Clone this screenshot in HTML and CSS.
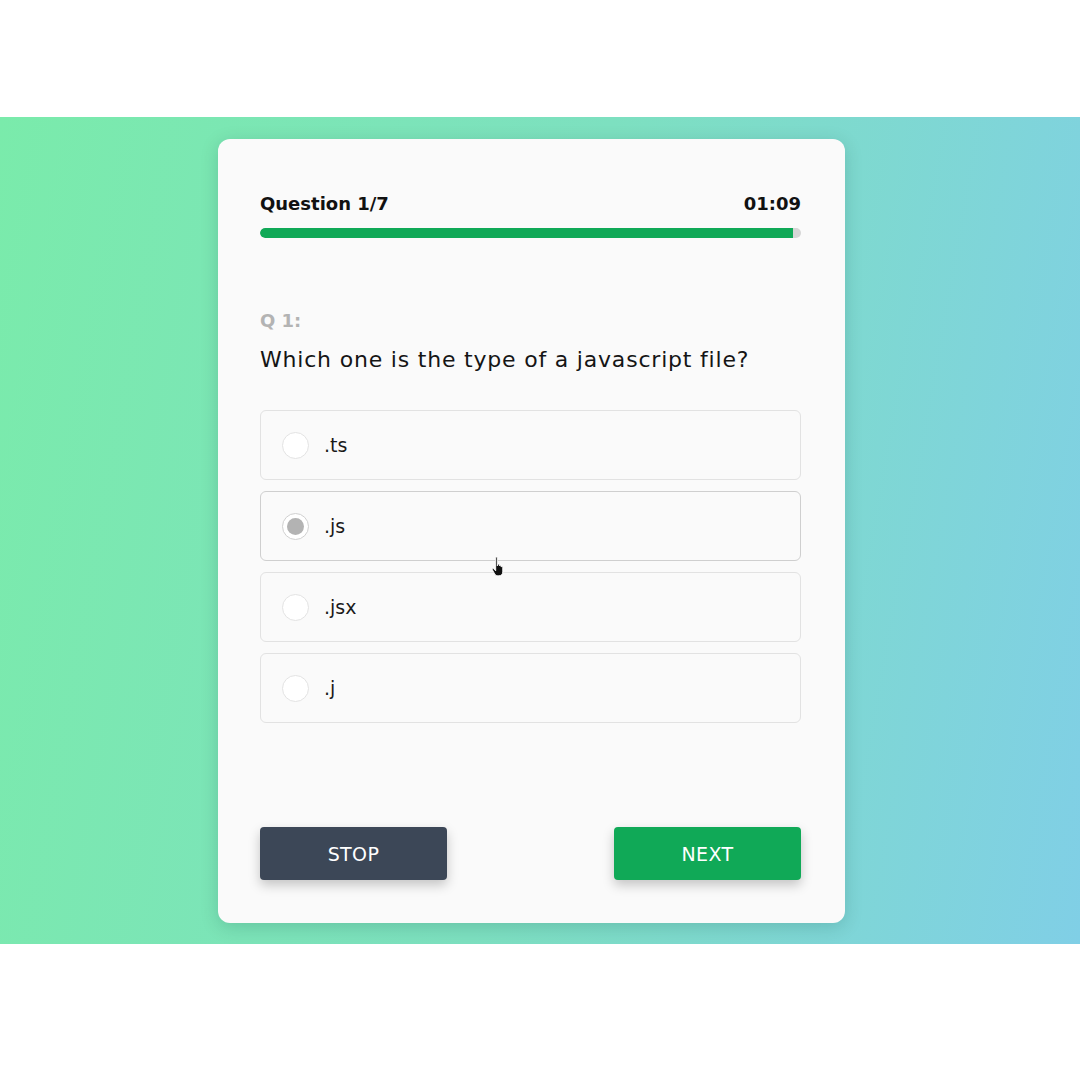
FILE: index.html
```html
<!DOCTYPE html>
<html>
<head>
<meta charset="utf-8">
<link rel="stylesheet" href="styles.css">
</head>
<body>
<div class="band">
  <div class="card">
    <div class="head">
      <span class="title">Question 1/7</span>
      <span class="timer">01:09</span>
    </div>
    <div class="bar"><div class="fill" style="width: 98.5%"></div></div>
    <div class="qnum">Q 1:</div>
    <div class="question">Which one is the type of a javascript file?</div>
    <div class="options">
      <div class="option"><span class="radio"></span><span class="label">.ts</span></div>
      <div class="option hover"><span class="radio checked"></span><span class="label">.js</span></div>
      <div class="option"><span class="radio"></span><span class="label">.jsx</span></div>
      <div class="option"><span class="radio"></span><span class="label">.j</span></div>
      <svg class="cursor" width="18" height="22" viewBox="0 0 16 20"><path d="M5 1.5c0-.8 1.5-.8 1.5 0V9l.3-1.2c.4-.8 1.6-.5 1.5.3l.1.9c.4-.8 1.5-.6 1.5.2v.8c.4-.7 1.5-.5 1.5.3v4.2c0 2-1.5 3.5-3.5 3.5H7c-1.3 0-2.2-.6-2.9-1.7L2 12.6c-.4-.8.5-1.6 1.2-1L5 13.5z" fill="#111" stroke="#fff" stroke-width="0.8"/></svg>
    </div>
    <div class="actions">
      <button class="btn stop">STOP</button>
      <button class="btn next">NEXT</button>
    </div>
  </div>
</div>
</body>
</html>
```
FILE: styles.css
```css
* { box-sizing: border-box; }
html, body { margin: 0; padding: 0; background: #ffffff; }
body {
  width: 1080px;
  height: 1080px;
  padding-top: 117px;
  font-family: "DejaVu Sans", "Open Sans", sans-serif;
  color: #1a1a1a;
}
.band {
  height: 827px;
  background: linear-gradient(100deg, #7aebab 0%, #7de0c0 50%, #80cfe6 100%);
  padding: 22px 0 0 218px;
  display: flex;
}
.card {
  width: 627px;
  height: 784px;
  background: #fafafa;
  border-radius: 12px;
  box-shadow: 0 4px 18px rgba(0, 60, 50, 0.18);
  padding: 53px 44px 0 42px;
  display: flex;
  flex-direction: column;
  position: relative;
}
.head {
  display: flex;
  justify-content: space-between;
  font-weight: bold;
  font-size: 18px;
  line-height: 24px;
  color: #111;
}
.bar {
  margin-top: 12px;
  height: 10px;
  background: #d6d6d6;
  border-radius: 5px;
  overflow: hidden;
}
.fill {
  height: 100%;
  background: #10a957;
  border-radius: 5px 0 0 5px;
}
.qnum {
  margin-top: 71px;
  font-size: 18px;
  font-weight: bold;
  color: #b3b3b3;
  line-height: 24px;
}
.question {
  margin-top: 13px;
  font-size: 22px;
  letter-spacing: 0.8px;
  line-height: 28px;
  color: #151515;
}
.options {
  margin-top: 36px;
  display: flex;
  flex-direction: column;
  gap: 11px;
  position: relative;
}
.option {
  height: 70px;
  border: 1px solid #e2e2e2;
  border-radius: 6px;
  background: #fafafa;
  display: flex;
  align-items: center;
  padding-left: 21px;
}
.option.hover { border-color: #cfcfcf; }
.radio {
  width: 27px;
  height: 27px;
  border-radius: 50%;
  border: 1px solid #e3e3e3;
  background: #fff;
  flex-shrink: 0;
  position: relative;
}
.radio.checked { border-color: #d0d0d0; }
.radio.checked::after {
  content: "";
  position: absolute;
  left: 4px;
  top: 4px;
  width: 17px;
  height: 17px;
  border-radius: 50%;
  background: #b3b3b3;
}
.label {
  margin-left: 15px;
  font-size: 19px;
  color: #1a1a1a;
}
.cursor {
  position: absolute;
  left: 230px;
  top: 146px;
}
.actions {
  margin-top: auto;
  margin-bottom: 43px;
  display: flex;
  justify-content: space-between;
}
.btn {
  width: 187px;
  height: 53px;
  border: none;
  border-radius: 4px;
  color: #fff;
  font-family: "DejaVu Sans", "Open Sans", sans-serif;
  font-size: 19px;
  letter-spacing: 0.4px;
  box-shadow: 0 5px 12px rgba(0, 0, 0, 0.22);
}
.stop { background: #3c4757; }
.next { background: #10a957; }
```
